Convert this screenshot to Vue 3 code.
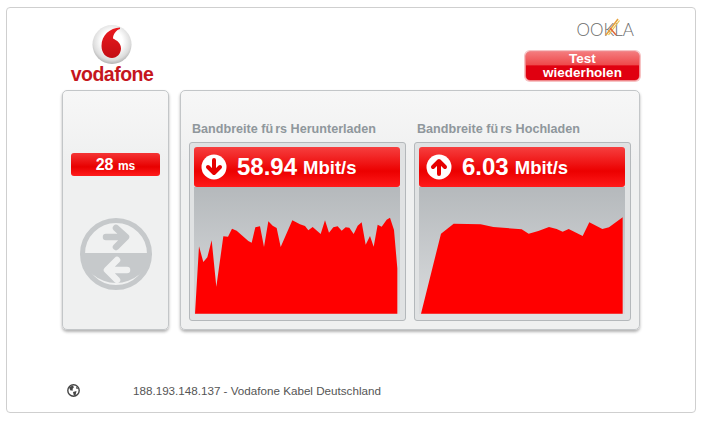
<script setup>
const downloadPoints = "30,326 42,124 55,171 67,157 80,106 94,245 115,94 129,95 141,71 155,77 190,108 200,113 211,67 225,64 237,126 250,49 263,62 275,69 287,126 322,46 345,58 360,63 370,76 383,66 407,87 420,46 432,83 445,67 458,64 470,77 482,67 493,68 506,87 518,62 530,52 542,119 555,93 566,125 578,59 590,65 605,44 615,38 627,75 637,190 637,326";
const uploadPoints = "33,326 93,86 131,56 212,58 250,66 335,73 356,86 385,78 417,66 440,72 458,80 476,72 518,93 538,52 577,72 597,67 638,37 638,326";
</script>

<template>
  <div class="frame">
    <header class="header">
      <div class="brand">
        <svg class="ball" viewBox="0 0 40 40" width="40" height="40">
          <defs>
            <radialGradient id="ballFill" cx="0.5" cy="0.42" r="0.6">
              <stop offset="0.45" stop-color="#ffffff" />
              <stop offset="0.8" stop-color="#dcdcdc" />
              <stop offset="1" stop-color="#a9a9a9" />
            </radialGradient>
            <linearGradient id="dropFill" x1="0" y1="0" x2="0" y2="1">
              <stop offset="0" stop-color="#ea1a1f" />
              <stop offset="1" stop-color="#c40d14" />
            </linearGradient>
          </defs>
          <circle cx="20" cy="19.5" r="19.5" fill="url(#ballFill)" />
          <path d="M28 2.5C18 3 9.5 10 9.5 21C9.5 28 14 33 20 33C25 33 29 28.5 29 23.5C29 18 25 15.5 21 13.5C21 9.5 24 5 28 4Z" fill="url(#dropFill)" />
        </svg>
        <div class="wordmark">vodafone</div>
      </div>
      <div class="actions">
        <div class="ookla">
          <span>OOKLA</span>
          <svg class="ookla-mark" viewBox="0 0 16 18" width="16" height="18">
            <path d="M1 17L13 1" stroke="#e8a13a" stroke-width="1.5" fill="none" />
            <path d="M3.500 17L14.500 2.500" stroke="#e8c24a" stroke-width="1.200" fill="none" />
            <path d="M5 10L11 17" stroke="#e0663a" stroke-width="1.500" fill="none" />
          </svg>
        </div>
        <button class="retry" type="button">Test<br />wiederholen</button>
      </div>
    </header>

    <main class="panels">
      <section class="panel ping">
        <div class="ping-pill"><b>28</b> <small>ms</small></div>
        <svg viewBox="0 0 72 72" width="72" height="72">
          <circle cx="36" cy="36" r="33.500" fill="#f0f1f1" stroke="#c6c9cb" stroke-width="5" />
          <path d="M0.500 35H71.500A36 36 0 0 1 0.500 35Z" fill="#c6c9cb" />
          <g fill="none" stroke-linecap="round" stroke-linejoin="round" stroke-width="6.500">
            <path d="M26 19H45M36 10L46 19L36 29" stroke="#c6c9cb" />
            <path d="M47 52H28M37 42L27 52L37 62" stroke="#f0f1f1" />
          </g>
        </svg>
      </section>

      <section class="panel results">
        <div class="column">
          <h2 class="title">Bandbreite f<span class="gap">ü</span>rs Herunterladen</h2>
          <div class="box">
            <div class="readout">
              <svg class="dir" viewBox="0 0 26 26" width="26" height="26">
                <circle cx="13" cy="13" r="12.500" fill="#fff" />
                <path d="M13 6V18M7 13L13 19L19 13" fill="none" stroke="#e60000" stroke-width="4" stroke-linecap="round" stroke-linejoin="round" />
              </svg>
              <span class="value">58.94</span>
              <span class="unit">Mbit/s</span>
            </div>
            <div class="chart">
              <svg viewBox="27 -54 618 381" width="206" height="127">
                <polygon :points="downloadPoints" fill="#ff0000" />
              </svg>
            </div>
          </div>
        </div>
        <div class="column">
          <h2 class="title">Bandbreite f<span class="gap">ü</span>rs Hochladen</h2>
          <div class="box">
            <div class="readout">
              <svg class="dir" viewBox="0 0 26 26" width="26" height="26">
                <circle cx="13" cy="13" r="12.500" fill="#fff" />
                <path d="M13 20V8M7 13L13 7L19 13" fill="none" stroke="#e60000" stroke-width="4" stroke-linecap="round" stroke-linejoin="round" />
              </svg>
              <span class="value">6.03</span>
              <span class="unit">Mbit/s</span>
            </div>
            <div class="chart">
              <svg viewBox="27 -54 618 381" width="206" height="127">
                <polygon :points="uploadPoints" fill="#ff0000" />
              </svg>
            </div>
          </div>
        </div>
      </section>
    </main>

    <footer class="footer">
      <svg viewBox="0 0 13 13" width="13" height="13">
        <circle cx="6.500" cy="6.500" r="5.700" fill="#fff" stroke="#444" stroke-width="1.400" />
        <path d="M2 3.500L5.500 1.500L7 3L5.500 5L6 6.500L3.500 6.500Z" fill="#444" />
        <path d="M6 8L9.500 7L8.500 11.500L6.800 11.500Z" fill="#444" />
        <path d="M9 2.500L11.500 4.500L9.500 5Z" fill="#444" />
      </svg>
      <span class="isp">188.193.148.137 - Vodafone Kabel Deutschland</span>
    </footer>
  </div>
</template>

<style scoped>
.frame {
  box-sizing: border-box;
  width: 690px;
  height: 406px;
  margin: 7px 0 0 6px;
  padding: 0 55px;
  border: 1px solid #cfcfcf;
  border-radius: 4px;
  background: #fff;
  font-family: "Liberation Sans", Arial, sans-serif;
}

.header {
  display: flex;
  justify-content: space-between;
  height: 82px;
}

.brand {
  display: flex;
  flex-direction: column;
  align-items: center;
  width: 82px;
  margin-left: 9px;
  padding-top: 17px;
}

.ball {
  display: block;
}

.wordmark {
  margin-top: -2px;
  color: #c5161d;
  font-size: 19.500px;
  font-weight: 700;
  line-height: 22px;
  letter-spacing: -0.500px;
}

.actions {
  display: flex;
  flex-direction: column;
  align-items: flex-end;
  width: 115px;
}

.ookla {
  position: relative;
  height: 18px;
  margin: 13px 6px 0 0;
  color: #6a6a6a;
  font-family: Lato, "Liberation Sans", sans-serif;
  font-size: 17px;
  font-weight: 300;
  line-height: 18px;
}

.ookla-mark {
  position: absolute;
  top: -3px;
  left: 28px;
}

.retry {
  box-sizing: border-box;
  width: 115px;
  height: 30px;
  margin-top: 12px;
  padding: 0;
  border: 1px solid #f0868a;
  border-radius: 5px;
  background: linear-gradient(#f47a7c 0%, #ee4a4c 45%, #e00010 50%, #e00010 100%);
  box-shadow: 0 0 0 1px #f7c3c4;
  color: #fff;
  font-family: inherit;
  font-size: 13.500px;
  font-weight: 700;
  line-height: 14px;
}

.panels {
  display: flex;
  gap: 11px;
  height: 240px;
}

.panel {
  box-sizing: border-box;
  height: 240px;
  border: 1px solid #c3c6c8;
  border-radius: 5px;
  background: linear-gradient(#f7f7f7, #eff0f0 30%);
  box-shadow: 0 2px 3px rgba(0, 0, 0, 0.3);
}

.ping {
  display: flex;
  flex-direction: column;
  align-items: center;
  gap: 42px;
  width: 107px;
  padding-top: 62px;
}

.ping-pill {
  box-sizing: border-box;
  width: 89px;
  height: 23px;
  border-radius: 3px;
  background: linear-gradient(#f43535, #e80000 60%, #ff1c1c);
  color: #fff;
  line-height: 23px;
  text-align: center;
}

.ping-pill b {
  font-size: 16px;
}

.ping-pill small {
  font-size: 12px;
  font-weight: 700;
}

.results {
  display: flex;
  align-items: flex-end;
  gap: 8px;
  width: 460px;
  padding: 0 8px 8px;
}

.column {
  width: 217px;
}

.title {
  margin: 0 0 5px 3px;
  color: #8f979c;
  font-size: 12.600px;
  font-weight: 700;
  line-height: 15px;
}

.gap {
  margin-right: 2px;
}

.box {
  box-sizing: border-box;
  width: 217px;
  height: 179px;
  padding: 4px;
  border: 1px solid #b4b8bb;
  border-radius: 3px;
  background: #e0e2e3;
}

.readout {
  display: flex;
  align-items: center;
  box-sizing: border-box;
  width: 206px;
  height: 40px;
  padding-left: 7px;
  border-radius: 3px;
  background: linear-gradient(#f63f3f, #ec0000 60%, #ff1a1a);
  color: #fff;
}

.dir {
  margin-right: 10px;
}

.value {
  margin-right: 6px;
  font-size: 24px;
  font-weight: 700;
}

.unit {
  margin-top: 2px;
  font-size: 18.500px;
  font-weight: 700;
}

.chart {
  width: 206px;
  height: 127px;
  background: linear-gradient(#b5b9bc, #dadcde);
}

.chart svg {
  display: block;
}

.footer {
  display: flex;
  align-items: center;
  height: 16px;
  margin-top: 52px;
  padding-left: 5px;
}

.isp {
  margin-left: 53px;
  color: #555;
  font-size: 11.650px;
}
</style>
